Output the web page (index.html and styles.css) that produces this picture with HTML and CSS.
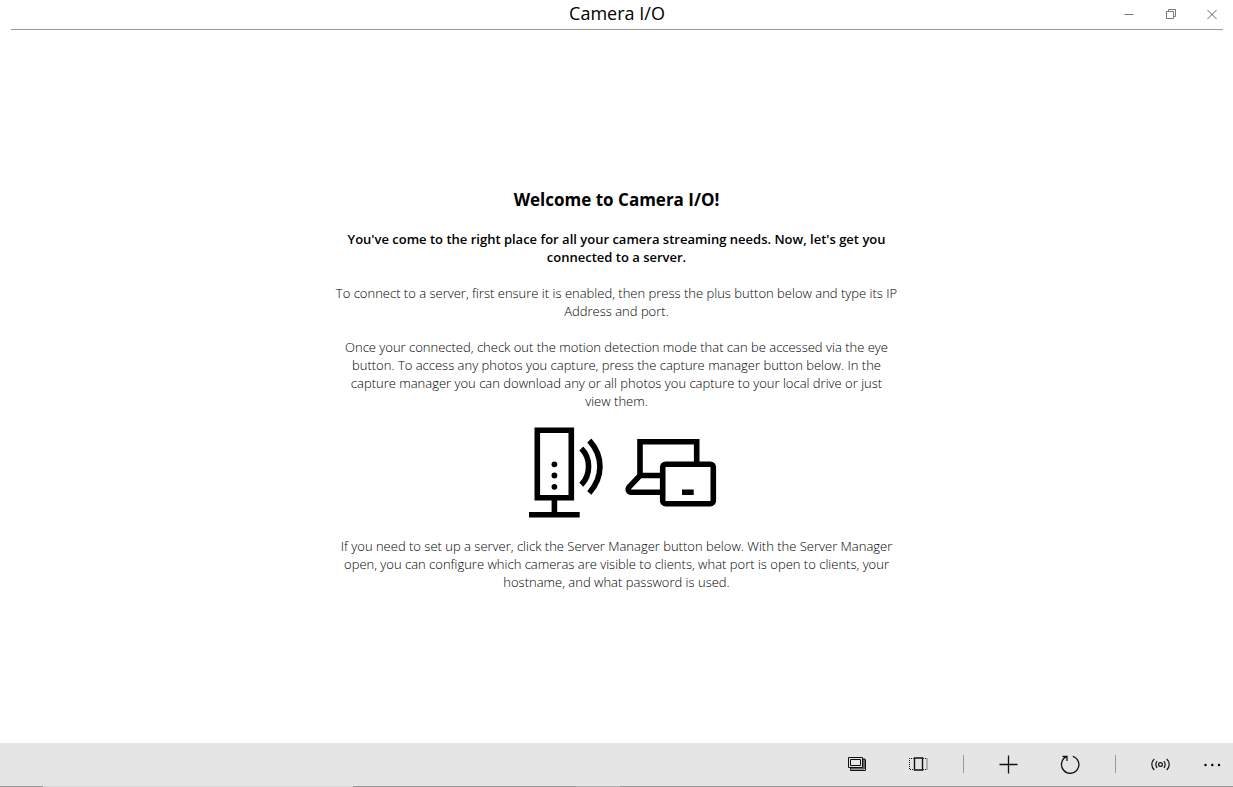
FILE: index.html
```html
<!DOCTYPE html>
<html lang="en">
<head>
<meta charset="utf-8">
<title>Camera I/O</title>
<link rel="stylesheet" href="styles.css">
</head>
<body>
<header class="titlebar">
  <div class="title">Camera I/O</div>
  <div class="window-controls">
    <button class="win-btn" aria-label="Minimize"><svg width="12" height="12" viewBox="0 0 12 12"><path d="M1.5 6.5h9"/></svg></button>
    <button class="win-btn" aria-label="Restore"><svg width="12" height="12" viewBox="0 0 12 12"><path d="M1.500 3.500h7v7h-7zM3.500 3.500v-2h7v7h-2"/></svg></button>
    <button class="win-btn" aria-label="Close"><svg width="12" height="12" viewBox="0 0 12 12"><path d="M1.500 2l9 9M10.500 2l-9 9"/></svg></button>
  </div>
</header>
<main class="content">
  <article class="welcome">
    <h1 class="heading">Welcome to Camera I/O!</h1>
    <p class="lead">You've come to the right place for all your camera streaming needs. Now, let's get you connected to a server.</p>
    <p class="text">To connect to a server, first ensure it is enabled, then press the plus button below and type its IP Address and port.</p>
    <p class="text">Once your connected, check out the motion detection mode that can be accessed via the eye button. To access any photos you capture, press the capture manager button below. In the capture manager you can download any or all photos you capture to your local drive or just view&nbsp;them.</p>
    <svg class="art" width="188" height="92" viewBox="0 0 188 92" aria-hidden="true">
      <g fill="none" stroke="#000" stroke-width="5.600">
        <path d="M8.300 3.300h34v67.500h-34zM25.400 71v16M0 87.700h50.700"/>
        <path d="M52.300 21.500C62 31 62 48 52.300 57.800M60.300 13.500C74.500 29 74.500 50 60.300 66"/>
        <path d="M111 48.500V14.800h56.700V37M132 48.500H111L100.500 59.500C98 62.500 99.500 65.300 102.500 65.300H132"/>
        <rect x="133.700" y="37.200" width="50.600" height="39.500" rx="3"/>
      </g>
      <circle cx="25.400" cy="37.300" r="2.900"/><circle cx="25.400" cy="48.500" r="2.900"/><circle cx="25.400" cy="59.800" r="2.900"/>
      <path d="M153 62.500h11.700v5.500H153z"/>
    </svg>
    <p class="text">If you need to set up a server, click the Server Manager button below. With the Server Manager open, you can configure which cameras are visible to clients, what port is open to clients, your hostname, and what password is used.</p>
  </article>
</main>
<footer class="commandbar">
  <button class="cmd" aria-label="Capture manager"><svg width="20" height="20" viewBox="0 0 20 20"><path fill="#777" stroke="none" d="M3 13h12V4h3v11H3z"/><path d="M1.500 3.500h14v10h-14zM15.500 5.500h3v11h-15v-3"/><path fill="#e9e9e9" d="M3.500 5.500h10v6h-10z"/><path stroke="#555" d="M17 5v10H3"/></svg></button>
  <button class="cmd" aria-label="Server manager"><svg width="20" height="20" viewBox="0 0 20 20"><path stroke-width="1.400" d="M6.500 4h8v12h-8z"/><path stroke-dasharray="1 1" d="M6 4.500H1.500v11H6M15 4.500h4v11H15"/></svg></button>
  <span class="divider"></span>
  <button class="cmd" aria-label="Add server"><svg width="20" height="20" viewBox="0 0 20 20"><path stroke-width="1.300" d="M.5 10.500h18M9.500 1.500v18"/></svg></button>
  <button class="cmd" aria-label="Refresh"><svg width="20" height="20" viewBox="0 0 20 20"><path stroke-width="1.300" d="M12.800 2.300A8.700 8.700 0 1 1 6.500 2.700M2.500 2.500h4.500v4.500"/></svg></button>
  <span class="divider"></span>
  <button class="cmd" aria-label="Motion detection"><svg width="20" height="20" viewBox="0 0 20 20"><g stroke-width="1.200"><circle cx="9.500" cy="10.500" r="1.900"/><path d="M6.200 7.200C4.400 9 4.400 12 6.200 13.800M12.800 7.200C14.600 9 14.600 12 12.800 13.800M3.300 5C0 8 0 13 3.300 16M15.700 5c3.300 3 3.300 8 0 11"/></g></svg></button>
  <button class="cmd more" aria-label="More"><svg width="20" height="20" viewBox="0 0 20 20"><g fill="#000" stroke="none"><circle cx="3.500" cy="11" r="1.200"/><circle cx="10.300" cy="11" r="1.200"/><circle cx="17" cy="11" r="1.200"/></g></svg></button>
</footer>
</body>
</html>
```

FILE: styles.css
```css
* { box-sizing: border-box; }
body {
  margin: 0;
  min-height: 100vh;
  display: flex;
  flex-direction: column;
  background: #fff;
  color: #000;
  font-family: "Open Sans", "Noto Sans", sans-serif;
}
button { padding: 0; border: 0; background: none; display: grid; place-items: center; }
svg { display: block; }
.titlebar {
  display: grid;
  grid-template-columns: 1fr auto 1fr;
  align-items: start;
  height: 30px;
  margin: 0 10px 0 11px;
  border-bottom: 1px solid #999;
}
.title { grid-column: 2; font-size: 18px; line-height: 26px; }
.window-controls { display: flex; justify-content: flex-end; gap: 18px; }
.win-btn { width: 24px; height: 28px; }
.win-btn:last-child { width: 22px; }
.win-btn:last-child svg { stroke: #666; }
.win-btn svg { fill: none; stroke: #777; }
.content {
  flex: 1;
  display: flex;
  flex-direction: column;
  align-items: center;
  justify-content: center;
  padding-top: 4px;
}
.welcome {
  width: 100%;
  max-width: 568px;
  text-align: center;
}
.heading { margin: 0 0 17px; font-size: 17px; line-height: 26px; font-weight: 700; }
.lead { margin: 0 0 18px; font-size: 13px; line-height: 18px; font-weight: 600; }
.text { margin: 0 0 18px; font-size: 13px; line-height: 18px; font-weight: 300; }
.text:last-child { margin-bottom: 0; }
.art { margin: -1px auto 18px; padding-left: 12px; box-sizing: content-box; }
.commandbar {
  display: flex;
  align-items: center;
  justify-content: flex-end;
  height: 44px;
  padding-bottom: 2px;
  background: linear-gradient(90deg, #999 43px, #d5d5d5 43px 353px, #999 353px 576px, #b0b0b0 576px 620px, #999 620px) bottom / 100% 1px no-repeat, #e5e5e5;
}
.cmd { width: 61px; height: 42px; }
.cmd svg { fill: none; stroke: #111; }
.more { width: 42px; }
.divider { width: 1px; height: 18px; margin: 0 14px 0 15px; background: #999; }
```
